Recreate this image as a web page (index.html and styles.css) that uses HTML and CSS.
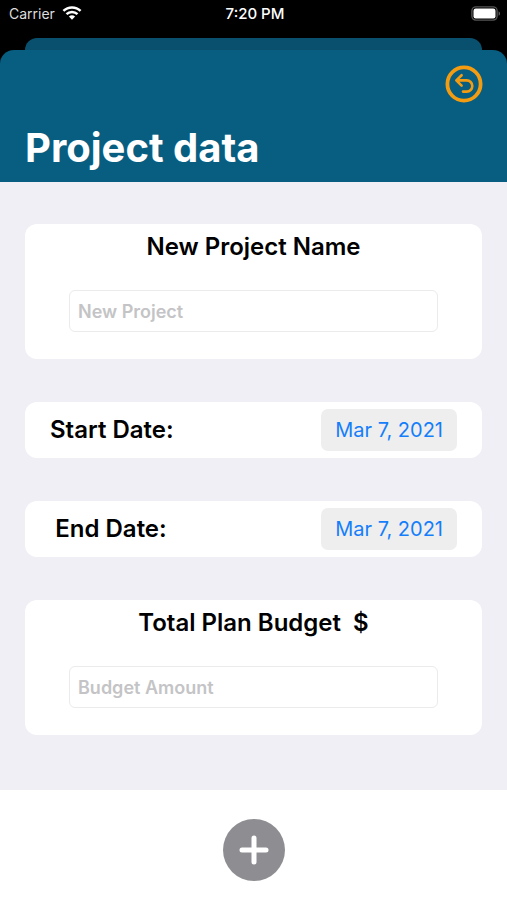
FILE: index.html
```html
<!DOCTYPE html>
<html lang="en">
<head>
<meta charset="utf-8">
<meta name="viewport" content="width=device-width, initial-scale=1">
<title>Project data</title>
<link rel="stylesheet" href="styles.css">
</head>
<body>
<div class="status">
  <div class="carrier">
    <span>Carrier</span>
    <svg width="20" height="14" viewBox="0 0 20 14" aria-hidden="true">
      <g fill="none" stroke="#fff" stroke-width="2.5">
        <path d="M1.4 4.9a12.4 12.4 0 0 1 17.2 0"/>
        <path d="M4.5 8.2a8 8 0 0 1 11 0"/>
      </g>
      <path d="M10 13.8 6.9 10.6a4.5 4.5 0 0 1 6.2 0z" fill="#fff"/>
    </svg>
  </div>
  <span class="clock">7:20 PM</span>
  <svg class="battery" width="30" height="15" viewBox="0 0 30 15" aria-hidden="true">
    <rect x=".9" y=".9" width="25.2" height="13.2" rx="4" fill="none" stroke="#555" stroke-width="1.4"/>
    <rect x="2.5" y="2.5" width="22" height="10" rx="2.2" fill="#fff"/>
    <path d="M27.6 5.2v4.6c1.9-.8 1.9-3.8 0-4.6z" fill="#666"/>
  </svg>
</div>
<div class="sheet-behind"></div>
<div class="sheet">
  <header class="header">
    <button class="back" type="button" aria-label="Back">
      <svg width="38" height="38" viewBox="0 0 38 38" fill="none" stroke="#f39c12" aria-hidden="true">
        <circle cx="19" cy="19" r="16.6" stroke-width="3.8"/>
        <path d="M16.6 10.2 11.3 15.4 16.6 20.6M11.5 15.4H21.7a5.6 5.6 0 0 1 0 11.2H18" stroke-width="2.6" stroke-linecap="round" stroke-linejoin="round"/>
      </svg>
    </button>
    <h1 class="title">Project data</h1>
  </header>
  <main class="form">
    <section class="card">
      <label class="label" for="name">New Project Name</label>
      <input class="field" id="name" type="text" placeholder="New Project">
    </section>
    <section class="card card-row">
      <span class="label row-label" id="start">Start Date:</span>
      <button class="date" type="button" aria-describedby="start">Mar 7, 2021</button>
    </section>
    <section class="card card-row">
      <span class="label row-label" id="end">End Date:</span>
      <button class="date" type="button" aria-describedby="end">Mar 7, 2021</button>
    </section>
    <section class="card">
      <label class="label" for="budget">Total Plan Budget&nbsp; $</label>
      <input class="field" id="budget" type="text" inputmode="decimal" placeholder="Budget Amount">
    </section>
  </main>
  <footer class="footer">
    <button class="add" type="button" aria-label="Add project">
      <svg width="30" height="30" viewBox="0 0 30 30" aria-hidden="true">
        <path d="M15 3v24M3 15h24" stroke="#fff" stroke-width="5" stroke-linecap="round"/>
      </svg>
    </button>
  </footer>
</div>
</body>
</html>
```
FILE: styles.css
```css
* {
  box-sizing: border-box;
}

body {
  margin: 0;
  min-height: 100vh;
  display: flex;
  flex-direction: column;
  background: #000;
  color: #000;
  font-family: Inter, "Liberation Sans", sans-serif;
}

button {
  border: 0;
  padding: 0;
  font: inherit;
  cursor: pointer;
}

svg {
  display: block;
}

.status {
  display: grid;
  grid-template-columns: 1fr auto 1fr;
  align-items: center;
  height: 38px;
  padding: 0 6px 12px 9px;
  color: #fff;
  font-size: 14px;
}

.carrier {
  display: flex;
  align-items: center;
  gap: 7px;
  color: #ddd;
}

.clock {
  font-size: 15px;
  font-weight: 500;
}

.battery {
  justify-self: end;
}

.sheet-behind {
  height: 24px;
  margin: 0 25px -12px;
  border-radius: 12px 12px 0 0;
  background: #09506e;
}

.sheet {
  position: relative;
  flex: 1;
  display: flex;
  flex-direction: column;
  overflow: hidden;
  border-radius: 14px 14px 0 0;
}

.header {
  display: flex;
  flex-direction: column;
  padding: 15px 24px 10px 25px;
  background: #085e81;
}

.back {
  align-self: flex-end;
  background: none;
}

.title {
  margin: 21px 0 0;
  color: #fff;
  font-size: 40px;
  font-weight: 700;
  line-height: 48px;
}

.form {
  display: flex;
  flex-direction: column;
  gap: 43px;
  padding: 42px 25px 55px;
  background: #f0eff5;
}

.card {
  display: flex;
  flex-direction: column;
  align-items: center;
  gap: 28px;
  padding: 8px 44px 27px;
  border-radius: 12px;
  background: #fff;
}

.label {
  font-size: 24px;
  font-weight: 600;
  line-height: 30px;
}

.field {
  width: 100%;
  height: 42px;
  padding: 0 8px;
  border: 1px solid #ebebeb;
  border-radius: 6px;
  background: #fff;
  color: #000;
  font-family: inherit;
  font-size: 18px;
  font-weight: 600;
}

.field::placeholder {
  color: #c4c4c6;
  opacity: 1;
}

.card-row {
  flex-direction: row;
  justify-content: space-between;
  padding: 7px 25px;
}

.row-label {
  min-width: 122px;
  text-align: center;
}

.date {
  height: 42px;
  padding: 0 14px;
  border-radius: 7px;
  background: #eee;
  color: #147efb;
  font-size: 20px;
}

.footer {
  flex: 1;
  display: flex;
  justify-content: center;
  align-items: flex-start;
  padding: 29px 24px 19px;
  background: #fff;
}

.add {
  display: grid;
  place-items: center;
  width: 62px;
  height: 62px;
  border-radius: 50%;
  background: #8e8d92;
}
```
